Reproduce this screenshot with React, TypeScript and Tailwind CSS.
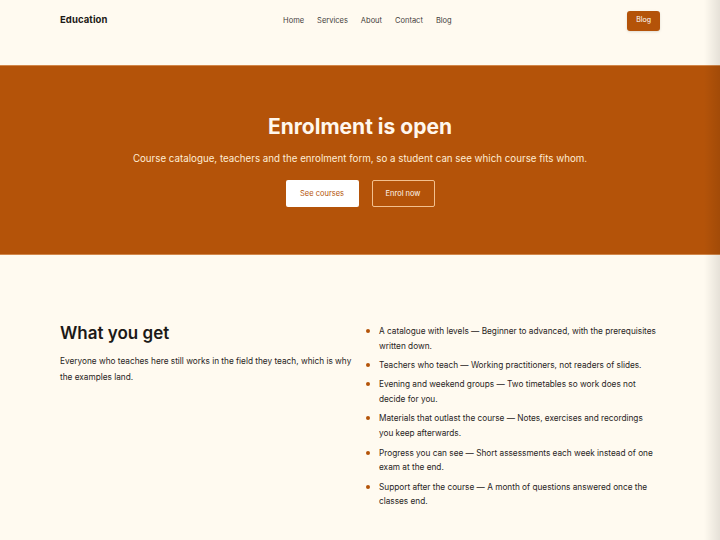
import React from 'react';

const navLinks = ['Home', 'Services', 'About', 'Contact', 'Blog'];

const perks = [
  { title: 'A catalogue with levels', text: 'Beginner to advanced, with the prerequisites written down.' },
  { title: 'Teachers who teach', text: 'Working practitioners, not readers of slides.' },
  { title: 'Evening and weekend groups', text: 'Two timetables so work does not decide for you.' },
  { title: 'Materials that outlast the course', text: 'Notes, exercises and recordings you keep afterwards.' },
  { title: 'Progress you can see', text: 'Short assessments each week instead of one exam at the end.' },
  { title: 'Support after the course', text: 'A month of questions answered once the classes end.' },
];

export default function App() {
  return (
    <div
      className="relative min-h-[540px] bg-[#fffaf0] text-[#1c1917] overflow-hidden"
      style={{ fontFamily: 'Inter, "Noto Sans", sans-serif' }}
    >
      {/* Header */}
      <header className="mx-auto w-[600px] h-[41px] flex items-center justify-between">
        <span className="text-[9.5px] font-bold tracking-[0.01em]">Education</span>
        <nav className="flex items-center gap-[13px]">
          {navLinks.map((link) => (
            <a key={link} className="text-[7.5px] text-[#44403c]">
              {link}
            </a>
          ))}
        </nav>
        <button className="h-[20px] px-[9px] rounded-[3px] bg-[#b45309] text-white text-[7px] shadow-sm">
          Blog
        </button>
      </header>

      {/* Hero */}
      <section className="mt-[24px] bg-[#b45309] border-y border-[#d2874a] py-[47px] flex flex-col items-center text-center">
        <h1 className="text-[21px] leading-[28px] font-bold text-[#fff7ed]">Enrolment is open</h1>
        <p className="mt-[10px] text-[9.75px] leading-[16px] text-[#ffedd5]">
          Course catalogue, teachers and the enrolment form, so a student can see which course fits whom.
        </p>
        <div className="mt-[13px] flex gap-[13px]">
          <button className="h-[27px] w-[73px] rounded-[2px] bg-white text-[#b45309] text-[7.5px]">
            See courses
          </button>
          <button className="h-[27px] w-[63px] rounded-[2px] border border-[#f3c08e] text-[#fff7ed] text-[7.5px]">
            Enrol now
          </button>
        </div>
      </section>

      {/* What you get */}
      <section className="mx-auto w-[600px] pt-[66px] grid grid-cols-2 gap-x-[12px]">
        <div>
          <h2 className="text-[17px] leading-[24px] font-semibold">What you get</h2>
          <p className="mt-[8px] text-[8.25px] leading-[16px] text-[#292524]">
            Everyone who teaches here still works in the field they teach, which is why the examples land.
          </p>
        </div>
        <ul className="flex flex-col gap-[4.5px] pt-[3px] pr-[2px]">
          {perks.map((p) => (
            <li key={p.title} className="flex text-[8.25px] leading-[14.8px] text-[#292524]">
              <span className="mt-[5px] mr-[9px] h-[4px] w-[4px] shrink-0 rounded-full bg-[#b45309]" />
              <span>{`${p.title} — ${p.text}`}</span>
            </li>
          ))}
        </ul>
      </section>

      {/* right edge shade */}
      <div className="pointer-events-none absolute inset-y-0 right-0 w-[16px] bg-gradient-to-r from-transparent to-black/10" />
    </div>
  );
}
